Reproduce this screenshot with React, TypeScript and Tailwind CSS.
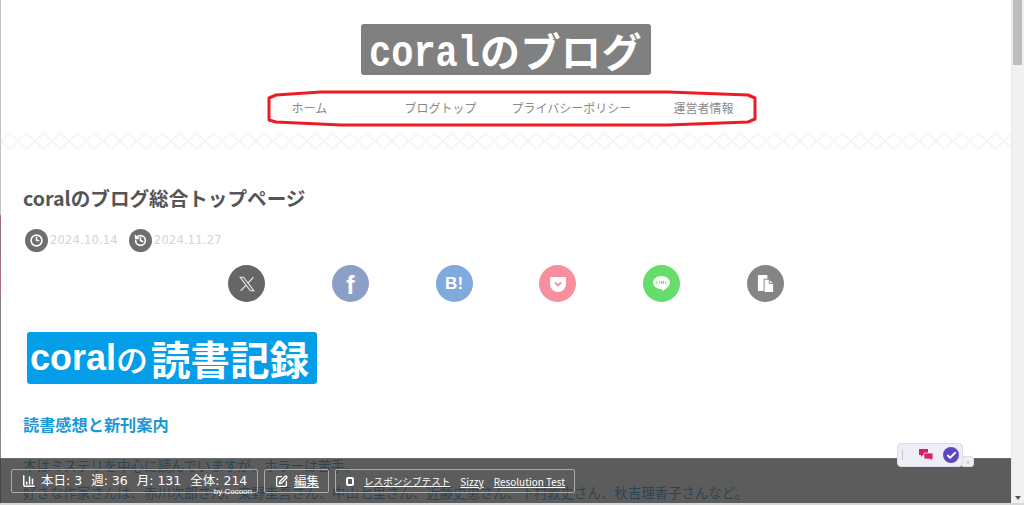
import { BarChart3, Clock3, Check, SquarePen, History } from "lucide-react";

const jp = "font-['Noto_Sans_CJK_JP','Noto_Sans',sans-serif]";

function Share({ bg, children }: { bg: string; children: React.ReactNode }) {
  return (
    <div className={`w-[37px] h-[37px] rounded-full flex items-center justify-center text-white ${bg}`}>
      {children}
    </div>
  );
}

function Tile() {
  return (
    <svg className="w-full h-[18px] block" aria-hidden="true">
      <defs>
        <pattern id="lattice" x="0" width="17" height="18" patternUnits="userSpaceOnUse">
          <path d="M0 9 8.500 1 17 9 8.500 17Z" fill="none" stroke="#f6f6f6" strokeWidth="2" />
        </pattern>
      </defs>
      <rect width="100%" height="18" fill="url(#lattice)" />
    </svg>
  );
}

export default function App() {
  return (
    <div className={`relative w-[1024px] h-[505px] overflow-hidden bg-white flex ${jp}`}>
      <div className="w-[1011px] h-[505px] pl-[1px] overflow-hidden">
        <header className="pt-[24px] flex flex-col items-center">
          <div className="h-[51px] w-[290px] ml-[-1px] bg-[#808080] rounded-[3px] flex items-baseline justify-center pt-[3px] text-white text-[40px] font-bold leading-[46px] whitespace-nowrap">
            <span className="inline-block text-[37px] font-['Liberation_Mono',monospace] scale-y-[1.2] origin-[50%_82%]">coral</span>
            <span className="font-['Noto_Sans_CJK_JP',sans-serif] tracking-[0.5px]">のブログ</span>
          </div>
          <nav className="mt-[17px] h-[32px] w-[490px] ml-[-1px] flex items-center text-[12px] text-[#8a8a8a]">
            <span className="ml-[31px] w-[113px]">ホーム</span>
            <span className="w-[107px]">ブログトップ</span>
            <span className="w-[162px]">プライバシーポリシー</span>
            <span>運営者情報</span>
          </nav>
        </header>
        <div className="mt-[8px]">
          <Tile />
        </div>
        <main className="pl-[22px]">
          <h1 className="mt-[34px] text-[19.600px] leading-[28px] font-bold text-[#555] font-['Noto_Sans_CJK_JP',sans-serif]">
            coralのブログ総合トップページ
          </h1>
          <div className="mt-[17px] ml-[2px] flex items-center text-[11.5px] text-[#d4d4d4] font-['DejaVu_Sans',sans-serif] tracking-[0.2px]">
            <span className="w-[23px] h-[23px] rounded-full bg-[#6e6e6e] flex items-center justify-center text-white">
              <Clock3 size={13} strokeWidth={3} />
            </span>
            <span className="ml-[2px]">2024.10.14</span>
            <span className="ml-[11px] w-[23px] h-[23px] rounded-full bg-[#6e6e6e] flex items-center justify-center text-white">
              <History size={13} strokeWidth={3} />
            </span>
            <span className="ml-[2px]">2024.11.27</span>
          </div>
          <div className="mt-[13px] ml-[205px] w-[556px] flex justify-between">
            <Share bg="bg-[#666666]">
              <svg viewBox="0 0 24 24" className="w-[18px] h-[18px]" fill="none" stroke="#e6e6e6" strokeWidth="1.600">
                <path d="M3 3h4.500L21 21h-4.500zM20.500 3 13.400 10.800M10.600 13.800 3.500 21" />
              </svg>
            </Share>
            <Share bg="bg-[#8c9fc6]">
              <span className="text-[25px] font-bold leading-none font-['Liberation_Sans',sans-serif] mt-[3px]">f</span>
            </Share>
            <Share bg="bg-[#80a9dc]">
              <span className="text-[17px] font-bold leading-none font-['Liberation_Sans',sans-serif]">B!</span>
            </Share>
            <Share bg="bg-[#f78f9f]">
              <svg viewBox="0 0 18 18" className="w-[18px] h-[18px]">
                <path d="M2 2h14a1 1 0 0 1 1 1v6a8 8 0 0 1-16 0V3a1 1 0 0 1 1-1Z" fill="#fff" />
                <path d="m6 7.500 3 3 3-3" fill="none" stroke="#f78f9f" strokeWidth="1.800" />
              </svg>
            </Share>
            <Share bg="bg-[#66dc6b]">
              <svg viewBox="0 0 18 18" className="w-[19px] h-[19px]">
                <path d="M9 2c4.400 0 8 2.700 8 6.200 0 3.300-4.500 6.600-7.600 8 .4-1 .4-1.900-.4-2C4.600 14 1 11.500 1 8.200 1 4.700 4.600 2 9 2Z" fill="#fff" />
                <path d="M4.500 6.500v3M7 6.500v3M9 6.500v3l2-3v3M13 6.500v3" fill="none" stroke="#66dc6b" strokeWidth="0.800" />
              </svg>
            </Share>
            <Share bg="bg-[#858585]">
              <svg viewBox="0 0 20 20" className="w-[19px] h-[19px]">
                <path d="M2 1h10v4H8v13H2Z" fill="#fff" />
                <path d="M9 6h5l4 4v9H9Z" fill="#fff" />
                <path d="M14 6v4h4" fill="none" stroke="#858585" strokeWidth="1" />
              </svg>
            </Share>
          </div>
          <div className="mt-[30px] ml-[4px] w-[290px] h-[52px] bg-[#049ee8] rounded-[3px] flex items-center pl-[3px] text-white leading-none font-bold whitespace-nowrap">
            <span className="text-[36px] font-['Liberation_Sans',sans-serif]">coral</span>
            <span className="text-[32px] font-medium">の</span>
            <span className="text-[39.500px] ml-[3px]">読書記録</span>
          </div>
          <h2 className="mt-[29px] text-[16.200px] leading-[22px] font-bold text-[#1b96d6]">読書感想と新刊案内</h2>
          <p className="mt-[17px] text-[13.450px] leading-[27px] text-[#0b85c8] whitespace-nowrap">
            本はミステリを中心に読んでいますが、ホラーは苦手。
            <br />
            好きな作家さんは、赤川次郎さん、東野圭吾さん、中山七里さん、近藤史恵さん、下村敦史さん、秋吉理香子さんなど。
          </p>
        </main>
      </div>

      <aside className="w-[13px] h-[505px] bg-[#f1f1f1] border-l border-[#e8e8e8] pl-[1px] pr-[2px]">
        <div className="h-[65px] bg-[#bdbdbd]" />
      </aside>

      {/* window edge, page behind shows through lower down */}
      <div className="absolute left-0 top-0 w-[1px] h-[505px] bg-[linear-gradient(#c4c4c4_0,#c4c4c4_214px,#a8687c_216px,#8a7a80_240px,#b06a86_285px,#80808a_300px,#8a8a8a_505px)]" />

      {/* red marker scribbled on top of the nav */}
      <svg className="absolute left-[266px] top-[89px] w-[492px] h-[40px]" viewBox="0 0 492 40" fill="none">
        <path
          d="M10 6 55 3H402L482 6 489 9V30L482 33 402 36H75L10 33 3 31V9Z"
          stroke="#ed1c24"
          strokeWidth="3"
          strokeLinejoin="round"
        />
      </svg>

      {/* debug bar */}
      <div className="absolute left-0 top-[458px] w-[1011px] h-[45px] bg-[#333]/80 border-t border-[#777]/60">
        <div className="absolute left-[11px] top-[10px] w-[247px] h-[24px] border border-[#aaa] rounded-[2px] flex items-center pl-[10px] text-[12.500px] text-white font-['DejaVu_Sans','Noto_Sans_CJK_JP',sans-serif] whitespace-nowrap">
          <BarChart3 size={14} strokeWidth={2.500} />
          <span className="ml-[5px]">本日: 3</span>
          <span className="ml-[9px]">週: 36</span>
          <span className="ml-[9px]">月: 131</span>
          <span className="ml-[9px]">全体: 214</span>
          <span className="absolute right-[5px] top-[17px] text-[8px] leading-[10px] font-['Liberation_Sans',sans-serif]">by Cocoon</span>
        </div>
        <div className="absolute left-[264px] top-[10px] w-[65px] h-[24px] border border-[#aaa] rounded-[2px] flex items-center pl-[10px] text-[12.500px] text-white">
          <SquarePen size={13} strokeWidth={2.500} />
          <span className="ml-[6px] underline">編集</span>
        </div>
        <div className="absolute left-[335px] top-[10px] w-[240px] h-[24px] border border-[#aaa] rounded-[2px] flex items-center pl-[10px] text-[10px] text-white whitespace-nowrap">
          <span className="w-[8px] h-[9px] border-2 border-white rounded-[2px]" />
          <span className="ml-[10px] underline text-[9.600px]">レスポンシブテスト</span>
          <span className="ml-[10px] underline">Sizzy</span>
          <span className="ml-[10px] underline">Resolution Test</span>
        </div>
      </div>

      {/* floating widget */}
      <div className="absolute left-[897px] top-[443px] w-[66px] h-[24px] bg-[#eeeef6] border border-[#dcdce4] rounded-[4px] flex items-center">
        <span className="ml-[4px] w-[1px] h-[10px] bg-[#c6c6ce]" />
        <svg viewBox="0 0 16 14" className="ml-[15px] w-[16px] h-[14px]">
          <path d="M1 1h9v6H5l-2 2V7H1Z" fill="#e11d62" />
          <path d="M6 5h9v6h-1v2l-2-2H6Z" fill="#e11d62" stroke="#eeeef6" strokeWidth="0.800" />
        </svg>
        <span className="ml-[9px] w-[16px] h-[16px] rounded-full bg-[#5b49c4] flex items-center justify-center text-white">
          <Check size={11} strokeWidth={4} />
        </span>
      </div>
      <div className="absolute left-[962px] top-[456px] w-[12px] h-[11px] bg-[#eeeef6] border border-[#dcdce4] rounded-r-[3px] text-[7px] leading-[9px] text-[#aaa] text-center">
        »
      </div>
      <div className="absolute left-[1015px] top-[496px] w-0 h-0 border-x-[3px] border-x-transparent border-t-[4px] border-t-[#555]" />
      <div className="absolute left-0 top-[503px] w-[1024px] h-[2px] bg-[#d8d8d8]" />
    </div>
  );
}
